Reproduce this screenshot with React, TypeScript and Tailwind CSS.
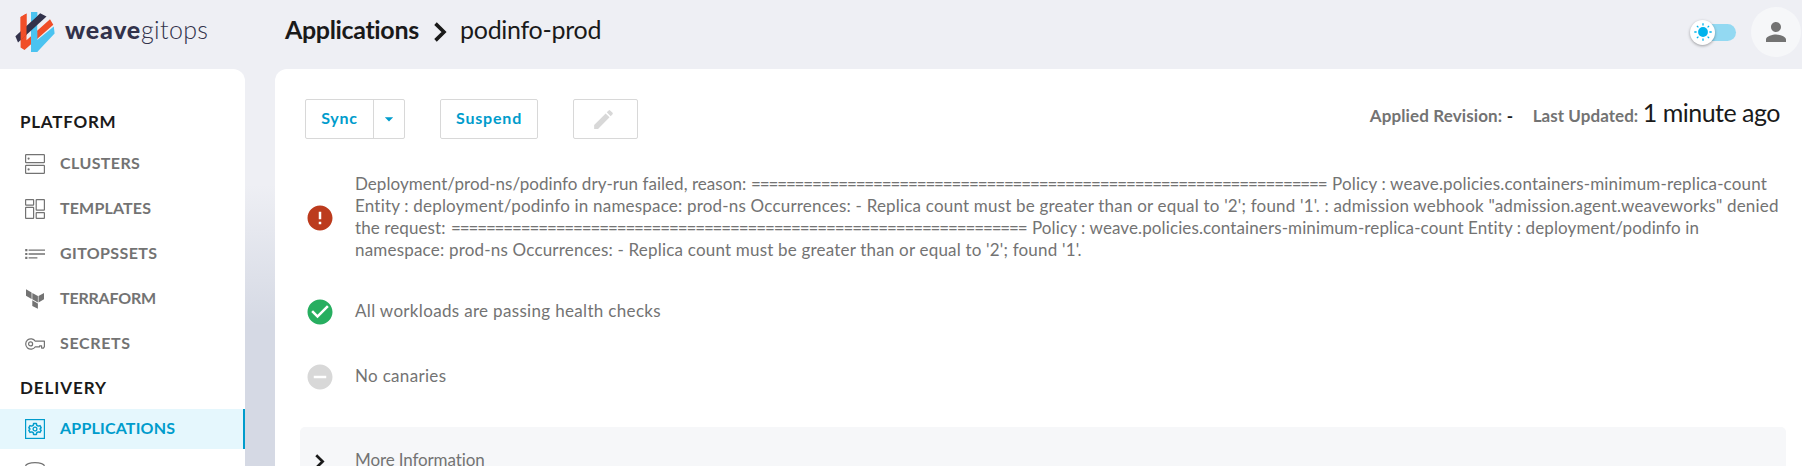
import React from "react";

const RULE = "=".repeat(66);

type NavItem = { label: string; tracking: string; icon: React.ReactNode };

function ClustersIcon() {
  return (
    <svg className="size-5" viewBox="0 0 20 20" fill="none" stroke="currentColor">
      <rect x="0.6" y="0.6" width="18.8" height="8" rx="0.6" strokeWidth="1.2" />
      <rect x="0.6" y="11.4" width="18.8" height="8" rx="0.6" strokeWidth="1.2" />
      <circle cx="3.6" cy="4.6" r="1.1" fill="currentColor" stroke="none" />
      <circle cx="3.6" cy="15.4" r="1.1" fill="currentColor" stroke="none" />
    </svg>
  );
}

function TemplatesIcon() {
  return (
    <svg className="size-5" viewBox="0 0 20 20" fill="none" stroke="currentColor" strokeWidth="1.2">
      <rect x="0.6" y="0.6" width="8" height="5.6" rx="0.4" />
      <rect x="0.6" y="8.4" width="8" height="11" rx="0.4" />
      <rect x="11.2" y="0.6" width="8.2" height="10.6" rx="0.4" />
      <rect x="11.2" y="13.6" width="8.2" height="5.8" rx="0.4" />
    </svg>
  );
}

function GitOpsSetsIcon() {
  return (
    <svg className="size-5" viewBox="0 0 20 20" fill="none" stroke="currentColor" strokeWidth="1.3">
      <path d="M3.6 6.2H20M3.6 10H20M3.6 13.8H12.4" />
      <path d="M0.2 6.2H2.4M0.2 10H2.4M0.2 13.8H2.4" strokeWidth="2.2" />
    </svg>
  );
}

function TerraformIcon() {
  return (
    <svg className="size-5" viewBox="0 0 20 20" fill="currentColor">
      <path d="M1 0.2L6.6 3.5V9.9L1 6.7Z" />
      <path d="M7.3 3.9L12.9 7.1V13.5L7.3 10.3Z" />
      <path d="M13.5 7.1L19 3.9V10.2L13.5 13.5Z" />
      <path d="M7.3 11.2L12.9 14.4V19.8L7.3 17.1Z" />
    </svg>
  );
}

function KeyIcon() {
  return (
    <svg className="size-5" viewBox="0 0 20 20" fill="none" stroke="currentColor" strokeWidth="1.2">
      <path d="M10.3 7.2H19.4V12.6L18.4 14.1H16.6V11.8H14.6V12.8H10.3A5.2 5.2 0 1 1 10.3 7.2Z" strokeLinejoin="round" />
      <circle cx="5.6" cy="9.9" r="2" />
    </svg>
  );
}

function ApplicationsIcon() {
  return (
    <svg className="size-5" viewBox="0 0 20 20" fill="none" stroke="currentColor">
      <rect x="0.6" y="0.6" width="18.8" height="18.8" strokeWidth="1.2" />
      <path
        d="M8.6 4.6H11.4L11.8 6.3L13.3 7.1L15 6.6L16.2 8.8L15 10L16.2 11.2L15 13.4L13.3 12.9L11.8 13.7L11.4 15.4H8.6L8.2 13.7L6.7 12.9L5 13.4L3.8 11.2L5 10L3.8 8.8L5 6.6L6.7 7.1L8.2 6.3Z"
        strokeWidth="1.5"
        strokeLinejoin="round"
      />
      <circle cx="10" cy="10" r="1.9" strokeWidth="1.3" />
    </svg>
  );
}

function SourcesIcon() {
  return (
    <svg className="size-5" viewBox="0 0 20 20" fill="none" stroke="currentColor" strokeWidth="1.2">
      <ellipse cx="10" cy="4" rx="9.4" ry="3.4" />
      <path d="M0.6 4V16C0.6 18.2 4.6 19.4 10 19.4S19.4 18.2 19.4 16V4" />
    </svg>
  );
}

const platform: NavItem[] = [
  { label: "CLUSTERS", tracking: "tracking-[0.4px]", icon: <ClustersIcon /> },
  { label: "TEMPLATES", tracking: "tracking-[0.16px]", icon: <TemplatesIcon /> },
  { label: "GITOPSSETS", tracking: "tracking-[0.39px]", icon: <GitOpsSetsIcon /> },
  { label: "TERRAFORM", tracking: "tracking-[-0.2px]", icon: <TerraformIcon /> },
  { label: "SECRETS", tracking: "tracking-[0.64px]", icon: <KeyIcon /> },
];

function NavRow({ item }: { item: NavItem }) {
  return (
    <li className="mb-[5px] flex h-10 items-center pl-[25px] text-[#737373]">
      {item.icon}
      <span className={`ml-[15px] pb-[2px] text-base font-bold ${item.tracking}`}>{item.label}</span>
    </li>
  );
}

function Logo() {
  return (
    <div className="flex items-center text-[25px] text-[#32324b]">
      <svg className="mt-1 h-10 w-10" viewBox="0 0 40 40">
        <path fill="#f04e28" d="M5.6 5L11.5 1.4V28.3L35 7.3L38.3 12.8L9.5 38L5.6 35.4Z" />
        <path fill="#4bc3f0" d="M16 0H22.2V28L38.8 14.5L39.6 21.5L22.2 40H16Z" />
        <path fill="#32324b" d="M25.2 1.2L31.5 4.6L3 30.5L0.4 24.2Z" />
        <path fill="#f04e28" d="M5.6 5L11.5 1.4V23L5.6 28.5Z" />
        <path fill="#4bc3f0" d="M16 0H22.2V4L16 9.5Z" />
        <path fill="#4bc3f0" d="M16 25L22.2 19.2V40H16Z" />
      </svg>
      <span className="ml-[10px] font-black tracking-[0.75px]">weave</span>
      <span className="font-light tracking-[0.36px]">gitops</span>
    </div>
  );
}

function ThemeSwitch() {
  return (
    <div className="flex items-center">
      <div className="z-10 flex size-[25px] items-center justify-center rounded-full bg-white shadow-[0_1px_3px_rgba(0,0,0,0.35)]">
        <svg className="size-[18px]" viewBox="0 0 18 18">
          <circle cx="9" cy="9" r="4.9" fill="#00b3ec" />
          <path
            d="M9 0.3V2.6M9 15.4V17.7M0.3 9H2.6M15.4 9H17.7M2.9 2.9L4.4 4.4M13.6 13.6L15.1 15.1M2.9 15.1L4.4 13.6M13.6 4.4L15.1 2.9"
            stroke="#00b3ec"
            strokeWidth="1.3"
          />
        </svg>
      </div>
      <div className="-ml-3 h-[17px] w-[33px] rounded-r-full bg-[#93d9f2]" />
    </div>
  );
}

function Chevron({ className }: { className: string }) {
  return (
    <svg className={className} viewBox="0 0 13 20" fill="none">
      <path d="M1.5 1.6L10 10L1.5 18.4" stroke="#1a1a1a" strokeWidth="3.6" />
    </svg>
  );
}

function StatusIcon({ color, d }: { color: string; d: string }) {
  return (
    <svg className={`size-[30px] shrink-0 ${color}`} viewBox="0 0 24 24" fill="currentColor">
      <path d={d} />
    </svg>
  );
}

export default function App() {
  return (
    <div className="flex h-[466px] flex-col overflow-hidden bg-[linear-gradient(to_bottom,#eeeff4_0px,#eeeff4_185px,#d5d9e4_325px)] font-['Lato','Liberation_Sans',sans-serif] text-[#1a1a1a]">
      <header className="flex h-[69px] shrink-0 items-start">
        <div className="flex h-[60px] w-[285px] items-center pl-[15px]">
          <Logo />
        </div>
        <div className="flex h-[60px] items-center text-[25px]">
          <span className="w-[149px] font-bold tracking-[-0.35px]">Applications</span>
          <Chevron className="mt-1 h-5 w-[13px]" />
          <span className="ml-[13px] tracking-[-0.28px]">podinfo-prod</span>
        </div>
        <div className="mt-[7px] ml-auto flex h-[50px] items-center pr-px">
          <ThemeSwitch />
          <div className="ml-[15px] flex size-[50px] items-center justify-center rounded-full bg-[#f6f7f9]">
            <svg className="size-[30px] text-[#737373]" viewBox="0 0 24 24" fill="currentColor">
              <path d="M12 12c2.21 0 4-1.79 4-4s-1.79-4-4-4-4 1.79-4 4 1.79 4 4 4zm0 2c-2.67 0-8 1.34-8 4v2h16v-2c0-2.66-5.33-4-8-4z" />
            </svg>
          </div>
        </div>
      </header>

      <div className="flex min-h-0 flex-1">
        <nav className="mr-[30px] w-[245px] shrink-0 overflow-hidden rounded-tr-[12px] bg-white pt-[34px]">
          <h2 className="flex h-[41px] items-center pb-[3px] pl-5 text-[17px] font-bold tracking-[0.75px]">PLATFORM</h2>
          <ul>
            {platform.map((item) => (
              <NavRow key={item.label} item={item} />
            ))}
          </ul>
          <h2 className="flex h-10 items-center pb-[3px] pl-5 text-[17px] font-bold tracking-[0.92px]">DELIVERY</h2>
          <div className="flex h-10 items-center border-r-2 border-[#009ccc] bg-[#e5f7fd] pl-[25px] text-[#009ccc]">
            <ApplicationsIcon />
            <span className="ml-[15px] pb-[2px] text-base font-bold tracking-[0.19px]">APPLICATIONS</span>
          </div>
          <div className="pt-[13px] pl-[25px] text-[#737373]">
            <SourcesIcon />
          </div>
        </nav>

        <main className="min-w-0 flex-1 overflow-hidden rounded-tl-[12px] bg-white pt-[30px] pl-[25px]">
          <div className="flex h-10 items-start pl-[5px]">
            <div className="flex h-10 rounded-[2px] border border-[#d8d8d8] text-base font-bold text-[#009ccc]">
              <button className="flex w-[68px] items-center justify-center border-r border-[#d8d8d8] pb-[2px] tracking-[0.8px]">Sync</button>
              <button className="flex w-[30px] items-center justify-center">
                <svg className="size-5" viewBox="0 0 24 24" fill="currentColor">
                  <path d="M7 10l5 5 5-5z" />
                </svg>
              </button>
            </div>
            <button className="ml-[35px] flex h-10 w-[98px] items-center justify-center rounded-[2px] border border-[#d8d8d8] pb-[2px] text-base font-bold tracking-[0.8px] text-[#009ccc]">
              Suspend
            </button>
            <button className="ml-[35px] flex h-10 w-[65px] items-center justify-center rounded-[2px] border border-[#d8d8d8] pr-1 text-[#d8d8d8]">
              <svg className="mt-px size-[25px]" viewBox="0 0 24 24" fill="currentColor">
                <path d="M3 17.25V21h3.75L17.81 9.94l-3.75-3.75L3 17.25zM20.71 7.04c.39-.39.39-1.02 0-1.41l-2.34-2.34a.9959.9959 0 0 0-1.41 0l-1.83 1.83 3.75 3.75 1.83-1.83z" />
              </svg>
            </button>
            <div className="-mt-[2px] ml-auto flex h-[30px] items-baseline pr-[22px] text-[17px] font-bold text-[#737373]">
              <span className="w-[137px] tracking-[0.12px]">Applied Revision:</span>
              <span className="w-[26px] text-[#1a1a1a]">-</span>
              <span className="w-[110px] tracking-[0.05px]">Last Updated:</span>
              <span className="text-[25px] leading-[30px] font-normal tracking-[-0.5px] text-[#1a1a1a]">1 minute ago</span>
            </div>
          </div>

          <div className="mt-[34px] flex h-[88px] items-center pl-[5px] text-[17px] leading-[22px] text-[#737373]">
            <StatusIcon color="mt-[2px] text-[#bc3b1d]" d="M12 2C6.48 2 2 6.48 2 12s4.48 10 10 10 10-4.48 10-10S17.52 2 12 2zm1 15h-2v-2h2v2zm0-4h-2V7h2v6z" />
            <div className="ml-5 whitespace-nowrap">
              <p>
                <span className="inline-block w-[396px] tracking-[0.04px]">Deployment/prod-ns/podinfo dry-run failed, reason:</span>
                <span className="inline-block w-[581px] tracking-[-1.14px]">{RULE}</span>
                <span className="tracking-[0.17px]">Policy : weave.policies.containers-minimum-replica-count</span>
              </p>
              <p className="tracking-[0.195px]">
                Entity : deployment/podinfo in namespace: prod-ns Occurrences: - Replica count must be greater than or equal to '2'; found '1'. : admission webhook "admission.agent.weaveworks" denied
              </p>
              <p>
                <span className="inline-block w-[96px] tracking-[0.1px]">the request:</span>
                <span className="inline-block w-[581px] tracking-[-1.14px]">{RULE}</span>
                <span className="tracking-[0.11px]">
                  Policy : weave.policies.containers-minimum-replica-count Entity : deployment/podinfo in
                </span>
              </p>
              <p className="tracking-[0.195px]">
                namespace: prod-ns Occurrences: - Replica count must be greater than or equal to '2'; found '1'.
              </p>
            </div>
          </div>

          <div className="mt-[36px] flex h-[30px] items-center pl-[5px] text-[17px] text-[#737373]">
            <StatusIcon color="text-[#27ae60]" d="M12 2C6.48 2 2 6.48 2 12s4.48 10 10 10 10-4.48 10-10S17.52 2 12 2zm-2 15l-5-5 1.41-1.41L10 14.17l7.59-7.59L19 8l-9 9z" />
            <span className="ml-5 pb-[3px] tracking-[0.33px]">All workloads are passing health checks</span>
          </div>
          <div className="mt-[35px] flex h-[30px] items-center pl-[5px] text-[17px] text-[#737373]">
            <StatusIcon color="text-[#d8d8d8]" d="M12 2C6.48 2 2 6.48 2 12s4.48 10 10 10 10-4.48 10-10S17.52 2 12 2zm5 11H7v-2h10v2z" />
            <span className="ml-5 pb-[3px] tracking-[0.32px]">No canaries</span>
          </div>

          <div className="mt-[35px] mr-4 flex h-[69px] items-center rounded-[5px] bg-[#f6f7f9] pl-[15px] text-[17px] text-[#737373]">
            <Chevron className="h-[15px] w-[10px]" />
            <span className="ml-[30px] pb-[3px] tracking-[-0.12px]">More Information</span>
          </div>
        </main>
      </div>
    </div>
  );
}
